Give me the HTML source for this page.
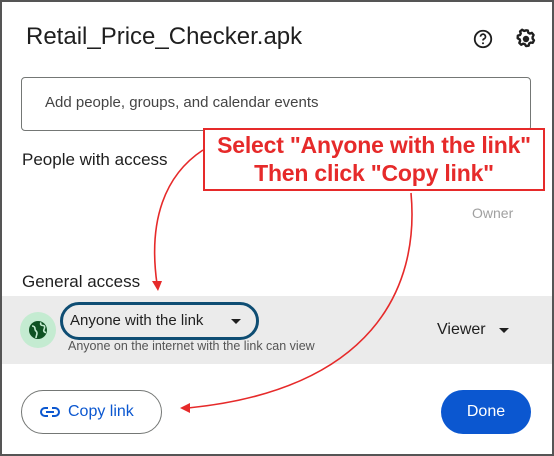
<!DOCTYPE html>
<html><head><style>
body{margin:0;width:554px;height:456px;overflow:hidden;background:#fff;font-family:"Liberation Sans",Arial,sans-serif;}
.frame{position:absolute;left:0;top:0;width:550px;height:452px;border:2px solid #555;}
.a{position:absolute;white-space:nowrap;}
</style></head><body>
<div class="frame"></div>
<div class="a" style="left:26px;top:23px;font-size:24px;color:#1f1f1f;">Retail_Price_Checker.apk</div>
<svg class="a" style="left:472px;top:28px" width="22" height="22" viewBox="0 0 24 24"><circle cx="12" cy="12" r="9" fill="none" stroke="#1f1f1f" stroke-width="2"/><path d="M9.3 9.5a2.7 2.7 0 1 1 3.8 2.4c-.8.4-1.1.9-1.1 1.8" fill="none" stroke="#1f1f1f" stroke-width="1.9"/><circle cx="12" cy="16.6" r="1.1" fill="#1f1f1f"/></svg>
<svg class="a" style="left:515px;top:28px" width="22" height="22" viewBox="0 0 24 24"><path d="M12 2.5l2 .3.5 2.4 1.6.9 2.3-.8 1.9 2.3-1.1 2.2v1.8l1.5 1.9-1.3 2.6-2.4-.2-1.5 1-.6 2.4-2.9.4-1.3-2.1-1.8-.5-2.1 1.2-2.1-2 .9-2.3-.5-1.7-2.2-1.1.2-2.9 2.4-.7.8-1.6-.8-2.3 2.3-1.8 2 1.3 1.7-.4z" fill="none" stroke="#1f1f1f" stroke-width="2.6" stroke-linejoin="round"/><circle cx="12" cy="12" r="3.5" fill="#1f1f1f"/></svg>
<div class="a" style="left:21px;top:77px;width:508px;height:52px;border:1px solid #747775;border-radius:4px;"></div>
<div class="a" style="left:45px;top:94px;font-size:15px;color:#444;">Add people, groups, and calendar events</div>
<div class="a" style="left:22px;top:150px;font-size:17px;color:#1f1f1f;">People with access</div>
<div class="a" style="left:472px;top:205px;font-size:14px;color:#a0a0a0;">Owner</div>
<div class="a" style="left:22px;top:272px;font-size:17px;color:#1f1f1f;">General access</div>
<div class="a" style="left:2px;top:296px;width:550px;height:68px;background:#ebebeb;"></div>
<div class="a" style="left:20px;top:312px;width:36px;height:36px;border-radius:50%;background:#c4ebd1;"></div>
<svg class="a" style="left:28px;top:320px" width="20" height="20" viewBox="0 0 20 20"><circle cx="10" cy="10" r="9" fill="#0f5223"/><path d="M4 6c2 0 3 1 3 3s2 2 2 4-1 3-1 5M13 2.5c-1 2 0 3 2 3s2 2 1 4 1 3 2 3" fill="none" stroke="#c4ebd1" stroke-width="1.6"/></svg>
<div class="a" style="left:60px;top:302px;width:193px;height:32px;border:3px solid #0e4d73;border-radius:20px;"></div>
<div class="a" style="left:70px;top:312px;font-size:15px;color:#1f1f1f;font-weight:500;">Anyone with the link</div>
<div class="a" style="left:231px;top:319px;width:0;height:0;border-left:5px solid transparent;border-right:5px solid transparent;border-top:5px solid #1f1f1f;"></div>
<div class="a" style="left:68px;top:339px;font-size:12.5px;color:#555;">Anyone on the internet with the link can view</div>
<div class="a" style="left:437px;top:321px;font-size:16px;color:#1f1f1f;">Viewer</div>
<div class="a" style="left:499px;top:328px;width:0;height:0;border-left:5px solid transparent;border-right:5px solid transparent;border-top:5px solid #1f1f1f;"></div>
<div class="a" style="left:21px;top:390px;width:139px;height:42px;border:1px solid #747775;border-radius:22px;"></div>
<svg class="a" style="left:40px;top:405px" width="20" height="14" viewBox="0 0 20 14"><path d="M8 3H5a4 4 0 0 0 0 8h3M12 3h3a4 4 0 0 1 0 8h-3M6 7h8" fill="none" stroke="#0b57d0" stroke-width="2"/></svg>
<div class="a" style="left:68px;top:403px;font-size:16px;color:#0b57d0;">Copy link</div>
<div class="a" style="left:441px;top:390px;width:90px;height:44px;border-radius:22px;background:#0b57d0;color:#fff;font-size:16px;text-align:center;line-height:44px;">Done</div>
<div class="a" style="left:203px;top:128px;width:338px;height:59px;border:2px solid #e62a2a;background:#fff;"></div>
<div class="a" style="left:203px;top:131px;width:342px;text-align:center;color:#e62a2a;font-weight:bold;font-size:23px;line-height:28px;letter-spacing:-0.2px;">Select "Anyone with the link"<br>Then click "Copy link"</div>
<svg class="a" style="left:0;top:0" width="554" height="456"><g fill="none" stroke="#e62a2a" stroke-width="1.6"><path d="M203 150C165 175 148 220 157 284"/><path d="M411 193C420 290 370 390 188 408"/></g><g fill="#e62a2a"><path d="M152 281l6 10 4-10z"/><path d="M180 408l10-5v10z"/></g></svg>
</body></html>
